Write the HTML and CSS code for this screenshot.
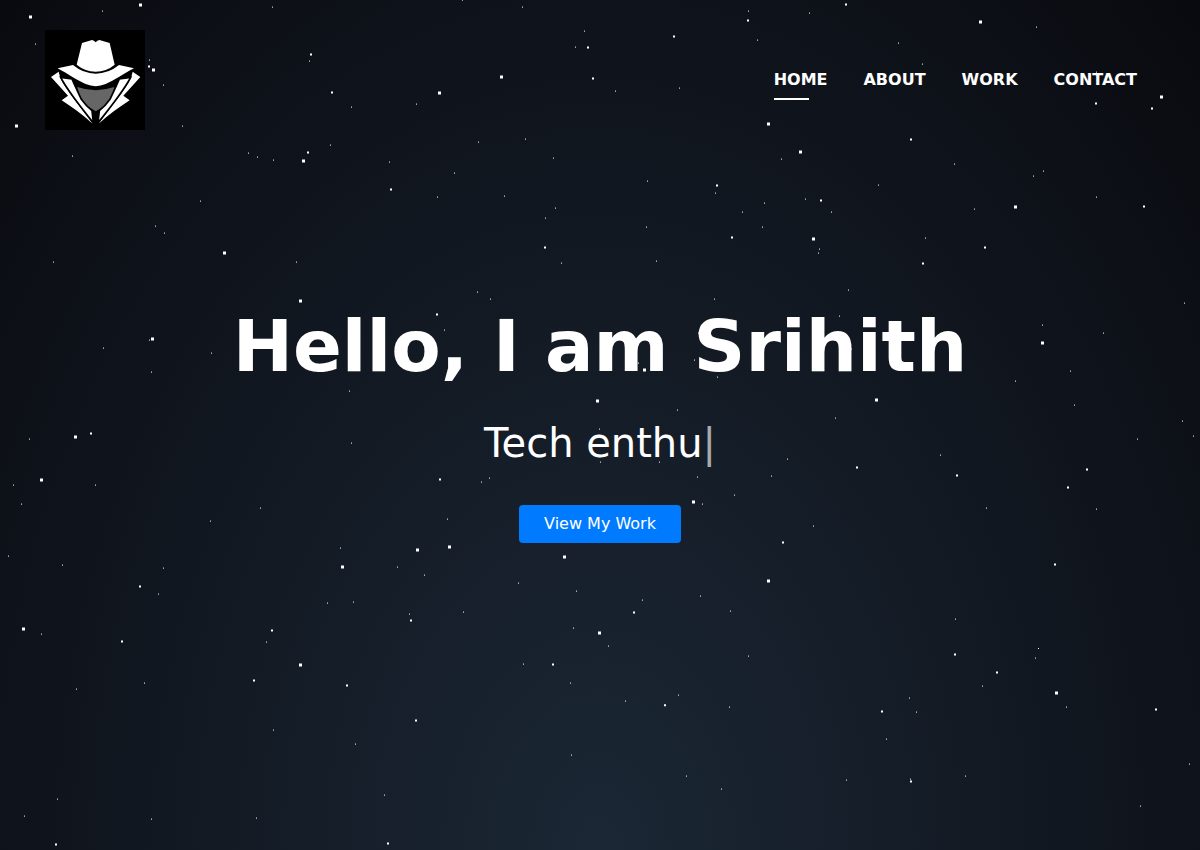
FILE: index.html
```html
<!DOCTYPE html>
<html lang="en">
<head>
<meta charset="utf-8">
<title>Srihith</title>
<link rel="stylesheet" href="styles.css">
</head>
<body>
<svg class="stars" viewBox="0 0 1200 850" aria-hidden="true">
<path class="star-small" d="M102 11h1M35 44h1M272 7h1M149 60h1M163 85h1M309 61h1M351 107h1M182 126h1M72 156h1M248 153h1M257 157h1M273 160h1M330 145h1M389 162h1M200 201h1M155 226h1M164 233h1M53 262h1M296 262h1
M462 0h1M522 7h1M748 11h1M584 31h1M575 47h1M757 40h1M615 91h1M679 88h1M416 104h1M478 142h1M525 139h1M553 158h1M454 173h1M647 181h1M437 197h1M504 196h1M715 193h1M781 159h1M555 208h1M545 218h1M742 212h1M764 203h1M762 227h1M646 227h1M561 263h1M656 261h1
M809 13h1M1036 27h1M898 43h1M922 64h1M1096 72h1M954 164h1M1043 171h1M1033 176h1M878 185h1M805 199h1M831 212h1M974 209h1M1096 197h1M925 238h1M819 249h1M818 253h1
M477 292h1M490 299h1M444 330h1M349 391h1M351 443h1M599 429h1M600 462h1M481 482h1M489 478h1M260 508h1M447 519h1M340 548h1
M714 299h1M848 290h1M839 316h1M694 360h1M717 377h1M638 363h1M851 349h1M698 333h1M677 410h1M835 418h1M659 462h1M697 477h1M787 459h1M771 476h1M734 495h1M702 504h1M940 455h1M813 526h1M986 508h1
M103 348h1M149 340h1M151 372h1M211 353h1M29 439h1M13 485h1M21 504h1M95 485h1M210 521h1
M1184 303h1M1042 325h1M1103 333h1M1070 371h1M1015 381h1M1074 405h1M1182 421h1M1193 436h1M1137 439h1M1096 509h1
M8 556h1M62 565h1M163 568h1M158 594h1M41 634h1M327 603h1M353 602h1M266 642h1M76 689h1M144 683h1M273 730h1M355 744h1M384 795h1M57 799h1M24 816h1M151 819h1M256 818h1M397 567h1
M424 575h1M518 583h1M576 591h1M642 600h1M700 596h1M730 611h1M409 614h1M463 612h1M573 628h1M608 646h1M523 664h1M570 683h1M748 656h1M678 695h1M625 701h1M729 707h1M571 755h1M686 776h1M721 789h1
M955 619h1M1038 648.4h1M1035 658h1M982 686h1M909 698h1M916 712h1M1066 707h1M886 739h1M846 780h1M910 779h1M965 776h1M1189 764h1M1140 806h1"/>
<path class="star-medium" d="M148 66.5h2M310 54.5h2M331 92.5h2M307 152.5h2M390 189.5h2M747 20.5h2M673 36.5h2M587 47.5h2M592 78.5h2M716 185.5h2M731 237.5h2M544 247.5h2
M845 4.5h2M1095 103.5h2M1151 108.5h2M910 139.5h2M820 200.5h2M1143 206.5h2M984 247.5h2M922 263.5h2M436 314.5h2M439 479.5h2M856 467.5h2M956 475.5h2M782 542.5h2M90 433.5h2M1086 469.5h2M1067 487.5h2
M139 586.5h2M121 641.5h2M271 630.5h2M253 680.5h2M346 685.5h2M55 844.5h2M387 843.5h2M633 612.5h2M410 620.5h2M552 664.5h2M664 705.2h2M415 720.5h2M1054 564.5h2M954 654.5h2M996 672.5h2M881 711.5h2M910 781.5h2M1155 709.5h2"/>
<path class="star-large" d="M29 17h3M139 5h3M152 70h3M15 126h3M302 161h3M223 253h3M500 77h3M438 93h3M767 124h3M799 152h3M979 22h3M1160 97h3M1014 207h3M812 239h3M299 301h3M596 401h3M416 550h3M448 547h3M643 370h3M875 400h3M692 502h3
M151 339h3M74 437h3M40 480h3M1041 343h3M341 567h3M22 629h3M299 665h3M563 557h3M598 633h3M767 581h3M1055 693h3"/>
</svg>
<header class="header">
  <svg class="logo" viewBox="30 30 300 300" role="img" aria-label="Logo">
    <rect x="30" y="30" width="300" height="300" fill="#000"/>
    <path fill="#fff" d="M141 69 L171 60 Q177 61 182 67 Q187 61 193 60 L224 69 L239 134 Q214 155 182 155 Q149 154 125 134 Z"/>
    <path fill="#fff" d="M68 145 L114 135 Q145 161 182 161 Q220 161 252 135 L297 145 C266 161 235 183 212 192 Q182 205 152 192 C127 182 99 162 68 145 Z"/>
    <path fill="#666" d="M127 201 Q182 220 238 201 Q231 239 208 259 L182 274 L158 259 Q133 237 127 201 Z"/>
    <g id="lapel" fill="#fff">
      <path d="M48 171 L71 155 L76 174 C92 209 137 262 173 311 C143 283 108 260 80 241 L99 227 Z"/>
      <path stroke="#000" stroke-width="5" d="M77 172 L111 177 C120 199 130 218 139 238 Q154 259 171 272 L175 308 C141 266 102 218 77 172 Z"/>
    </g>
    <use href="#lapel" transform="matrix(-1 0 0 1 364 0)"/>
  </svg>
  <nav class="nav">
    <a class="nav-link active" href="#home">HOME</a>
    <a class="nav-link" href="#about">ABOUT</a>
    <a class="nav-link" href="#work">WORK</a>
    <a class="nav-link" href="#contact">CONTACT</a>
  </nav>
</header>
<main class="hero">
  <h1 class="title">Hello, I am Srihith</h1>
  <p class="subtitle">Tech enthu<span class="cursor">|</span></p>
  <a class="button" href="#work">View My Work</a>
</main>
</body>
</html>
```
FILE: styles.css
```css
* { box-sizing: border-box; }
body {
  margin: 0;
  height: 850px;
  overflow: hidden;
  background: radial-gradient(ellipse at bottom, #1b2735 0%, #090a0f 100%);
  color: #fff;
  font-family: "DejaVu Sans", sans-serif;
  display: flex;
  flex-direction: column;
}
.stars {
  position: absolute;
  top: 0;
  left: 0;
  width: 1200px;
  height: 850px;
  fill: none;
  stroke: #fff;
  pointer-events: none;
}
.star-small { stroke-width: 1; transform: translateY(0.1px); }
.star-medium { stroke-width: 2; }
.star-large { stroke-width: 3; }
.header {
  display: flex;
  justify-content: space-between;
  align-items: center;
  height: 160px;
  padding: 0 63px 0 45px;
}
.logo { width: 100px; height: 100px; display: block; }
.nav { display: flex; gap: 36px; }
.nav-link {
  position: relative;
  color: #fff;
  font-size: 16px;
  font-weight: 700;
  line-height: 24px;
  text-decoration: none;
}
.nav-link.active::after {
  content: "";
  position: absolute;
  left: 0;
  bottom: -8px;
  width: 35px;
  height: 2px;
  background: #fff;
}
.hero {
  display: flex;
  flex-direction: column;
  align-items: center;
  padding-top: 143px;
}
.title { margin: 0; font-size: 72px; font-weight: 700; line-height: 86px; }
.subtitle { margin: 24px 0 0; font-size: 40px; line-height: 60px; }
.cursor { color: rgba(255, 255, 255, 0.63); }
.button {
  margin-top: 32px;
  padding: 7px 25px;
  border-radius: 4px;
  background: #007bff;
  color: #fff;
  font-size: 16px;
  line-height: 24px;
  text-decoration: none;
}
```
